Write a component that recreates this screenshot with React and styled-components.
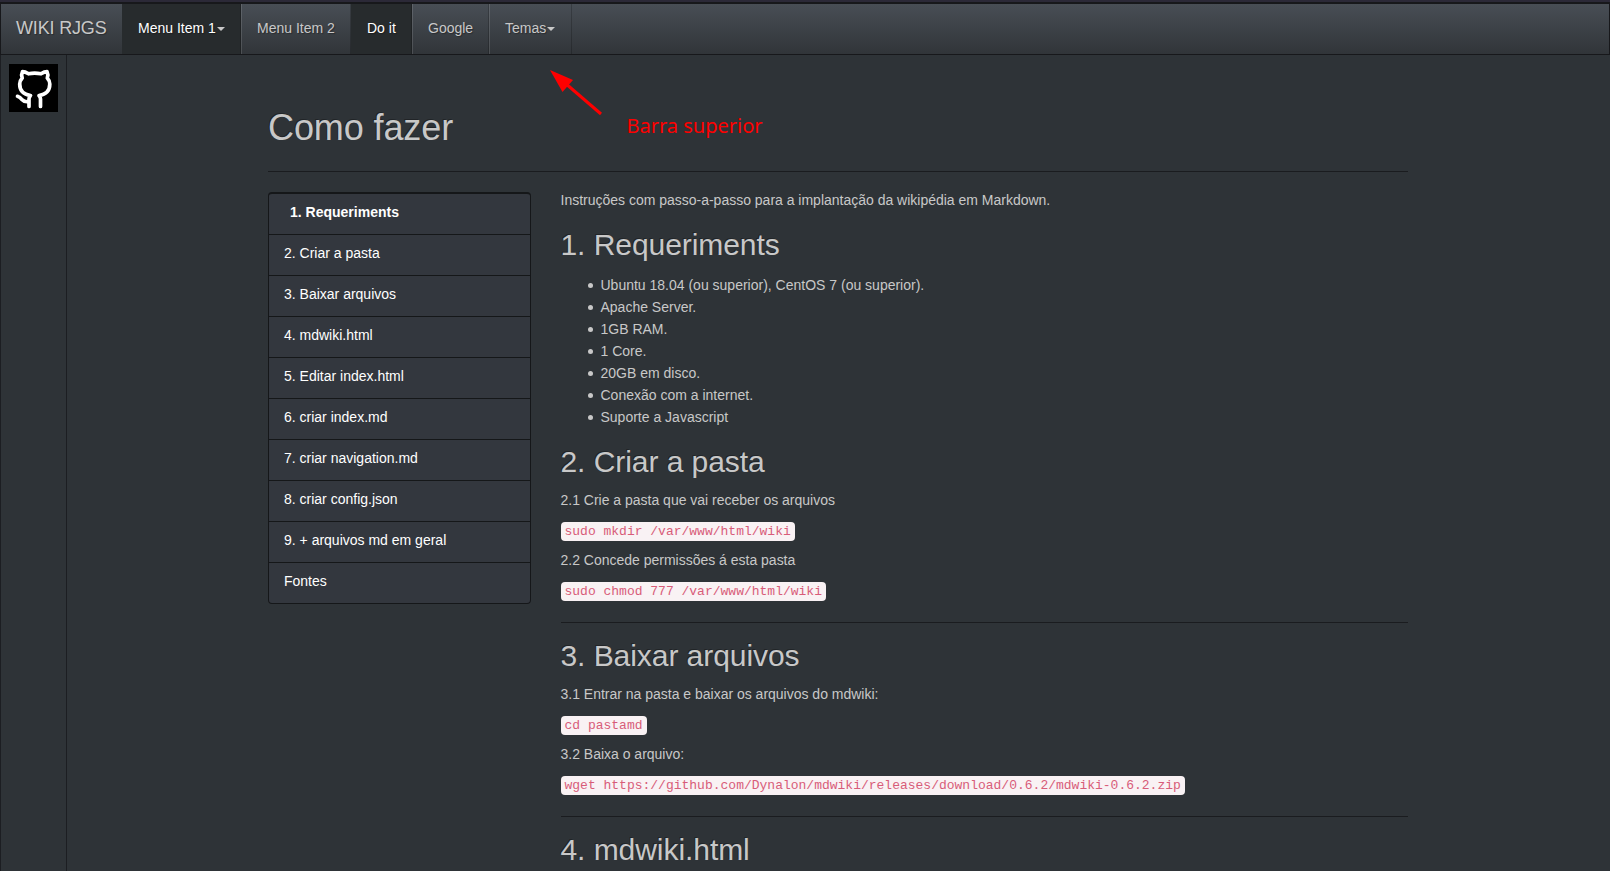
import React from "react";
import styled, { createGlobalStyle } from "styled-components";

const GlobalStyle = createGlobalStyle`
  * { box-sizing: border-box; }
  html, body { margin: 0; height: 871px; overflow: hidden; }
  body {
    background: #2e3337;
    color: #c8c8c8;
    font: 14px/20px "Liberation Sans", Arial, sans-serif;
  }
`;

const Page = styled.div`
  position: relative;
  height: 871px;
  display: flex;
  flex-direction: column;
  overflow: hidden;
  border-top: 2px solid #2b2937;
`;

const Navbar = styled.nav`
  display: flex;
  flex: none;
  height: 53px;
  border: 1px solid #17181b;
  border-top-width: 2px;
  background: linear-gradient(#484e55, #3a3f44 60%, #313539);
  text-shadow: 1px 1px 1px rgba(0, 0, 0, 0.3);
`;

const Brand = styled.a`
  width: 121px;
  padding: 14px 15px;
  font-size: 18px;
  letter-spacing: -0.17px;
  white-space: nowrap;
`;

const NavItem = styled.a`
  display: flex;
  align-items: center;
  width: ${(p) => p.$width}px;
  padding: 0 0 2px ${(p) => (p.$active ? 16 : 15)}px;
  white-space: nowrap;
  color: ${(p) => (p.$active ? "#fff" : "#c8c8c8")};
  background: ${(p) => (p.$active ? "#272b2d" : "transparent")};
  border-left: ${(p) => (p.$active ? "0" : "1px solid rgba(255, 255, 255, 0.13)")};
  border-right: 1px solid rgba(0, 0, 0, 0.2);
`;

const Caret = styled.i`
  margin: 2px 0 0 1px;
  border: 4px solid transparent;
  border-top-color: #c8c8c8;
  border-bottom: 0;
`;

const Body = styled.div`
  display: flex;
  flex: 1;
  min-height: 0;
  border-left: 1px solid #1c1e22;
`;

const LogoRail = styled.aside`
  flex: none;
  width: 66px;
  padding: 9px 8px;
  border-right: 1px solid #1c1e22;
`;

const Logo = styled.svg`
  display: block;
  width: 49px;
  height: 48px;
  background: #000;
`;

const Main = styled.main`
  width: 1140px;
  margin-left: 201px;
`;

const PageHeader = styled.header`
  height: 117px;
  padding-top: 53px;
  border-bottom: 1px solid #1a1c1f;
`;

const Title = styled.h1`
  margin: 0;
  font-size: 36px;
  line-height: 40px;
  font-weight: 400;
  letter-spacing: -0.1px;
  text-shadow: -1px -1px 0 rgba(0, 0, 0, 0.3);
`;

const Columns = styled.div`
  display: flex;
  align-items: flex-start;
  gap: 30px;
`;

const Toc = styled.ul`
  width: 262.5px;
  flex: none;
  margin: 20px 0 0;
  padding: 0;
  list-style: none;
  background: #33373e;
  border: 1px solid #151719;
  border-top-width: 2px;
  border-radius: 4px;
`;

const TocItem = styled.li`
  height: 41px;
  padding: 8px 15px;
  color: #fff;
  border-bottom: 1px solid #151719;
  &:first-child {
    padding-left: 21px;
    font-weight: 700;
  }
  &:last-child { border-bottom: 0; height: 40px; }
`;

const Article = styled.article`
  flex: 1;
  min-width: 0;
  padding-top: 18px;
`;

const Paragraph = styled.p`
  height: 20px;
  margin: 0 0 ${(p) => (p.$lead ? 18 : 10)}px;
  letter-spacing: -0.007px;
`;

const Heading = styled.h2`
  margin: 16px 0 12px;
  font-size: 30px;
  line-height: 33px;
  font-weight: 400;
  letter-spacing: -0.06px;
  text-shadow: -1px -1px 0 rgba(0, 0, 0, 0.3);
`;

const Bullets = styled.ul`
  margin: 13px 0 17px;
  padding-left: 40px;
  line-height: 22px;
  list-style: none;
`;

const Bullet = styled.li`
  display: flex;
  &::before {
    content: "";
    width: 5px;
    height: 5px;
    margin: 9px 7.5px 0 -12.5px;
    border-radius: 50%;
    background: #c8c8c8;
  }
`;

const Code = styled.code`
  display: inline-block;
  height: 19px;
  padding: 1px 4px 0;
  border-radius: 4px;
  background: #f9f2f4;
  color: #d85c79;
  font: 13px/18px "Liberation Mono", monospace;
  letter-spacing: 0;
  white-space: nowrap;
  vertical-align: top;
  margin-top: 2px;
`;

const Rule = styled.hr`
  height: 1px;
  margin: 22px 0 16px;
  border: 0;
  background: #1a1c1f;
`;

const Arrow = styled.svg`
  position: absolute;
  left: 545px;
  top: 61px;
`;

const Note = styled.span`
  position: absolute;
  left: 626.5px;
  top: 110px;
  color: #f00;
  font: 20px/28px "Noto Sans", sans-serif;
  white-space: nowrap;
`;

const sections = [
  "2. Criar a pasta",
  "3. Baixar arquivos",
  "4. mdwiki.html",
  "5. Editar index.html",
  "6. criar index.md",
  "7. criar navigation.md",
  "8. criar config.json",
  "9. + arquivos md em geral",
  "Fontes",
];

const requirements = [
  "Ubuntu 18.04 (ou superior), CentOS 7 (ou superior).",
  "Apache Server.",
  "1GB RAM.",
  "1 Core.",
  "20GB em disco.",
  "Conexão com a internet.",
  "Suporte a Javascript",
];

export default function App() {
  return (
    <>
      <GlobalStyle />
      <Page>
        <Navbar>
          <Brand>WIKI RJGS</Brand>
          <NavItem $width={119} $active>Menu Item 1<Caret /></NavItem>
          <NavItem $width={110}>Menu Item 2</NavItem>
          <NavItem $width={61} $active>Do it</NavItem>
          <NavItem $width={77}>Google</NavItem>
          <NavItem $width={83}>Temas<Caret /></NavItem>
        </Navbar>
        <Body>
          <LogoRail>
            <Logo viewBox="0 0 49 48">
              <path
                d="M20 42.5V35Q20 32.8 21.5 31.5C14.5 30.5 10.7 26.5 10.7 20Q10.7 16.8 13.2 14Q12 10.5 13.5 7.6Q16 7.6 19.5 9.8Q25.5 8.3 32 9.8Q35.5 7.6 38 7.6Q39.5 10.5 38.3 14Q40.8 16.8 40.8 20C40.8 26.5 37 30.5 30 31.5Q31.5 32.8 31.5 35V42.5M20 37.6Q15.5 38.3 13.2 35.8Q11 33 8.5 32.3"
                fill="none"
                stroke="#fff"
                strokeWidth="3.7"
                strokeLinecap="round"
                strokeLinejoin="round"
              />
            </Logo>
          </LogoRail>
          <Main>
            <PageHeader>
              <Title>Como fazer</Title>
            </PageHeader>
            <Columns>
              <Toc>
                <TocItem>1. Requeriments</TocItem>
                {sections.map((s) => <TocItem key={s}>{s}</TocItem>)}
              </Toc>
              <Article>
                <Paragraph $lead>Instruções com passo-a-passo para a implantação da wikipédia em Markdown.</Paragraph>
                <Heading>1. Requeriments</Heading>
                <Bullets>
                  {requirements.map((r) => <Bullet key={r}>{r}</Bullet>)}
                </Bullets>
                <Heading>2. Criar a pasta</Heading>
                <Paragraph>2.1 Crie a pasta que vai receber os arquivos</Paragraph>
                <Paragraph><Code>sudo mkdir /var/www/html/wiki</Code></Paragraph>
                <Paragraph>2.2 Concede permissões á esta pasta</Paragraph>
                <Paragraph><Code>sudo chmod 777 /var/www/html/wiki</Code></Paragraph>
                <Rule />
                <Heading>3. Baixar arquivos</Heading>
                <Paragraph>3.1 Entrar na pasta e baixar os arquivos do mdwiki:</Paragraph>
                <Paragraph><Code>cd pastamd</Code></Paragraph>
                <Paragraph>3.2 Baixa o arquivo:</Paragraph>
                <Paragraph><Code>wget https://github.com/Dynalon/mdwiki/releases/download/0.6.2/mdwiki-0.6.2.zip</Code></Paragraph>
                <Rule />
                <Heading>4. mdwiki.html</Heading>
              </Article>
            </Columns>
          </Main>
        </Body>
        <Arrow width="60" height="56" viewBox="0 0 60 56">
          <path d="M20 20L56 51" stroke="#f00" strokeWidth="3" />
          <path d="M5 7L28 17L17.5 29Z" fill="#f00" />
        </Arrow>
        <Note>Barra superior</Note>
      </Page>
    </>
  );
}
